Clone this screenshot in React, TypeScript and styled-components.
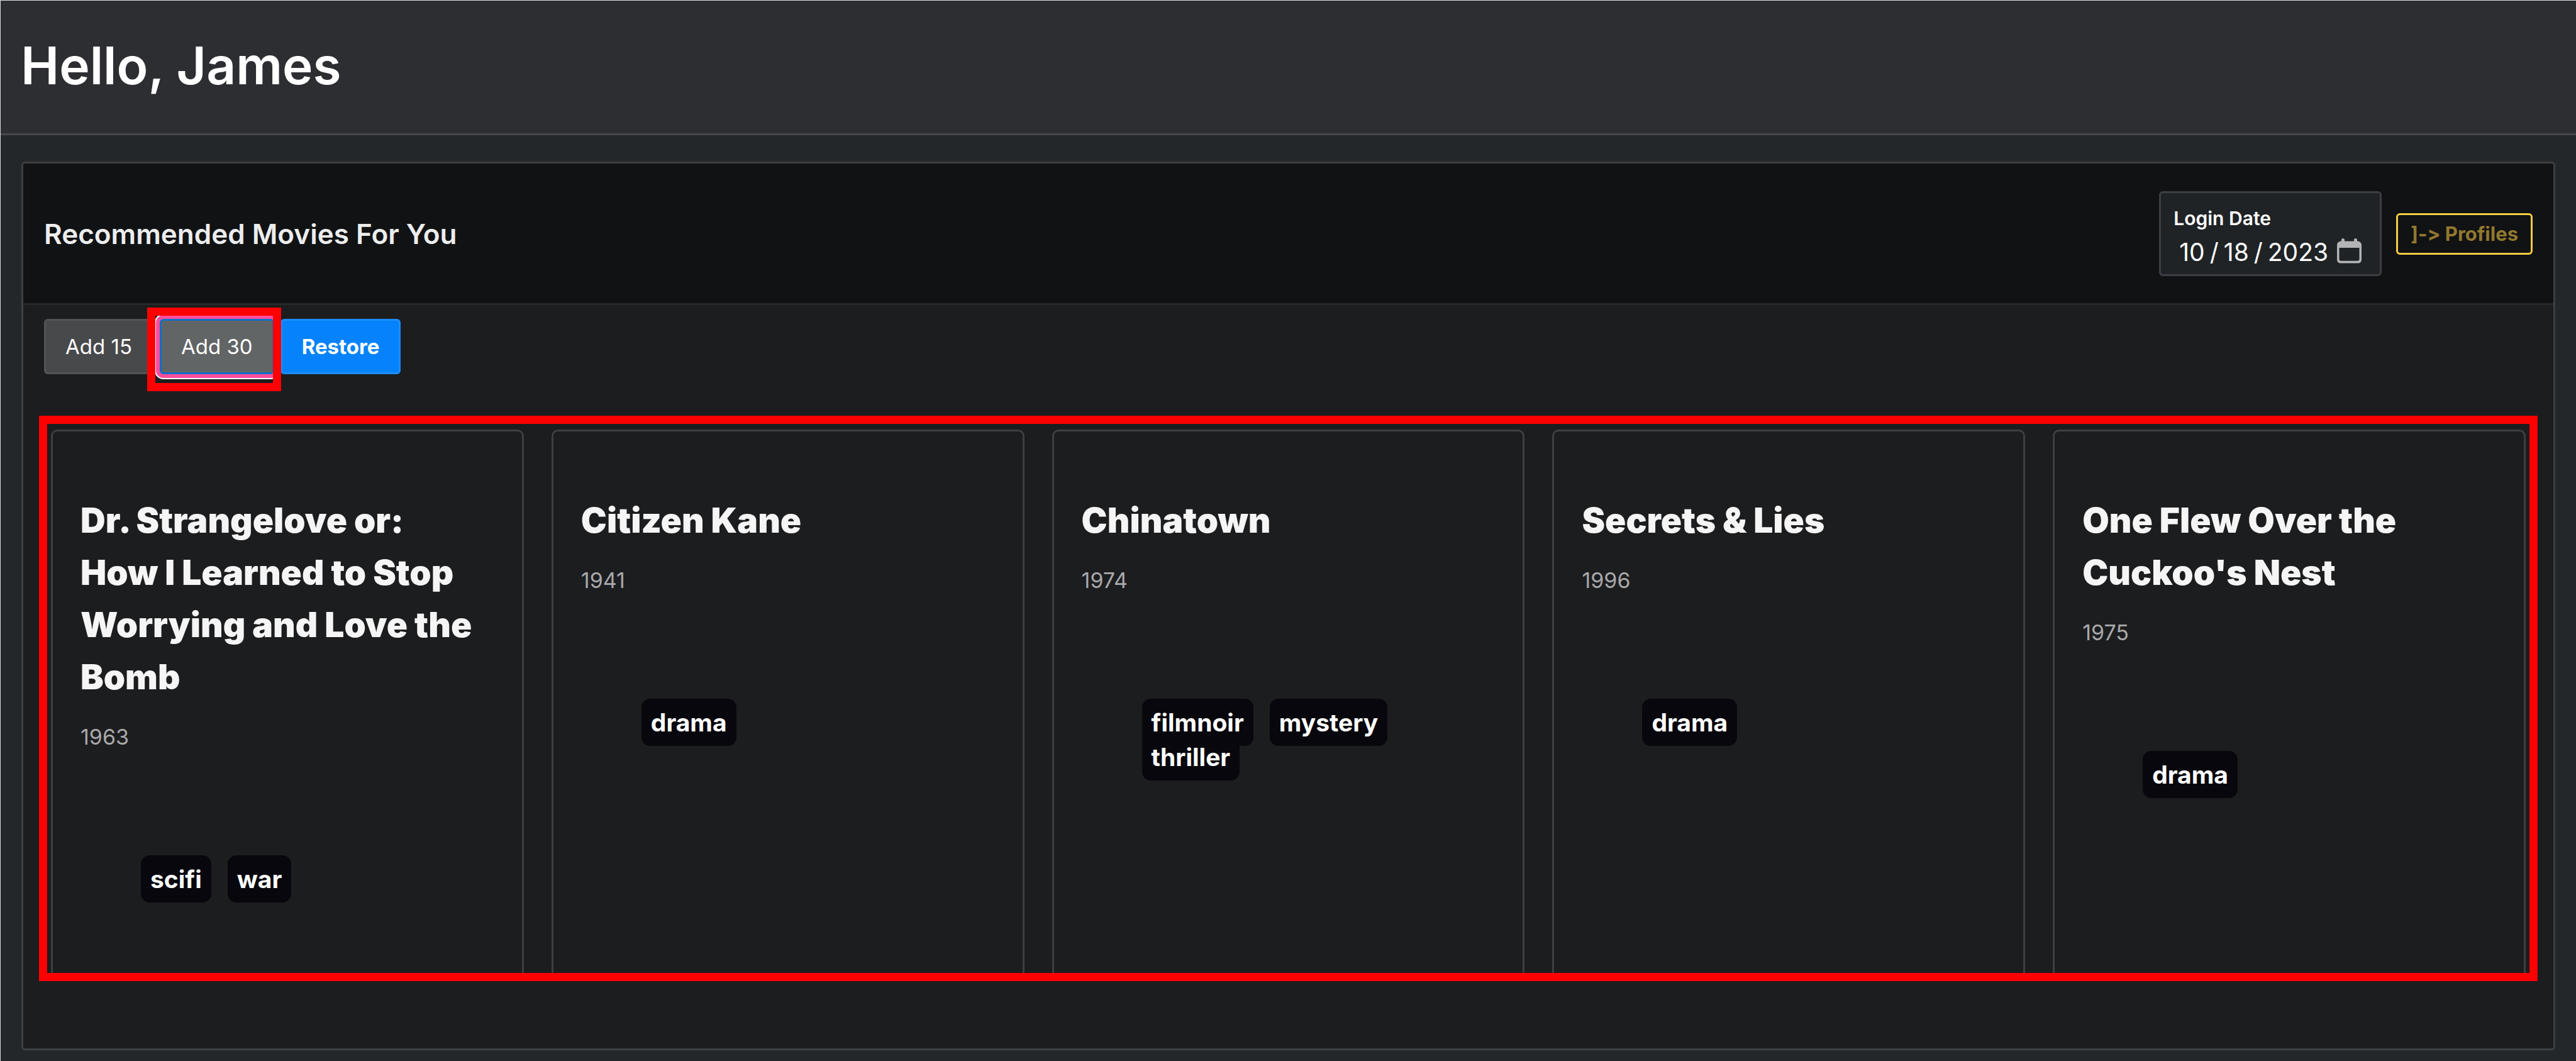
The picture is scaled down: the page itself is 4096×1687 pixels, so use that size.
import React from "react";
import styled, { createGlobalStyle, css } from "styled-components";

const GlobalStyle = createGlobalStyle`
  *, *::before, *::after { box-sizing: border-box; }
  html { background: #23272a; }
  body {
    margin: 0;
    min-height: 100vh;
    border-top: 1px solid #d9dadb;
    border-left: 1px solid #d9dadb;
    background: #23272a;
    color: #ffffff;
    font-family: Inter, "Liberation Sans", sans-serif;
    font-size: 32px;
  }
  h1, h2, h3, p, ul { margin: 0; padding: 0; }
`;

const PageHeader = styled.header`
  display: flex;
  align-items: center;
  padding: 52px 32px 55px;
  background: #2d2e32;
  border-bottom: 3px solid #46484b;
`;

const Greeting = styled.h1`
  font-size: 82px;
  line-height: 104px;
  font-weight: 600;
`;

const Main = styled.main`
  padding: 42px 33px 17px;
`;

const Panel = styled.section`
  border: 3px solid #3d4043;
  border-radius: 6px;
  background: #1c1d1f;
  overflow: hidden;
`;

const PanelHeader = styled.div`
  display: flex;
  align-items: center;
  gap: 23px;
  padding: 44px 33px 43px;
  background: #111214;
  border-bottom: 3px solid #27292b;
`;

const PanelTitle = styled.h2`
  flex: 1;
  font-size: 44px;
  line-height: 56px;
  font-weight: 600;
  color: #ededed;
`;

const DateField = styled.label`
  display: flex;
  flex-direction: column;
  gap: 7px;
  width: 354px;
  padding: 20px 29px 9px 20px;
  border: 3px solid #3c3f43;
  border-radius: 6px;
  background: #1f2325;
  font-size: 30px;
  line-height: 40px;
  font-weight: 600;
`;

const DateRow = styled.span`
  display: flex;
  align-items: center;
`;

const DateInput = styled.input`
  flex: 1;
  min-width: 0;
  height: 53px;
  padding: 0 0 0 8px;
  border: 0;
  background: transparent;
  color: #ffffff;
  color-scheme: dark;
  font-family: inherit;
  font-size: 39px;
  font-weight: 400;

  &::-webkit-calendar-picker-indicator { display: none; }
  &::-webkit-datetime-edit-text { padding: 0 7px; }
`;

const ProfilesButton = styled.button`
  height: 66px;
  padding: 0 20px;
  border: 3px solid #f7cd45;
  border-radius: 6px;
  background: transparent;
  color: #91782f;
  font-family: inherit;
  font-size: 31px;
  font-weight: 700;
  font-variant-ligatures: none;
`;

const Toolbar = styled.div`
  display: flex;
  gap: 10px;
  padding: 22px 33px 66px;
`;

type Tone = "neutral" | "focused" | "primary";

const tones = {
  neutral: css`
    background: #48494b;
    border-color: #525355;
  `,
  focused: css`
    background: #626566;
    border-color: #0c6fc8;
    box-shadow: 0 0 0 6px #ff4d9c, 0 0 0 8px #ffffff;
  `,
  primary: css`
    background: #0683fc;
    border-color: #1b8dff;
    font-weight: 700;
  `,
};

const ActionButton = styled.button<{ $tone: Tone }>`
  height: 88px;
  padding: 0 31px;
  border: 3px solid;
  border-radius: 6px;
  color: #ffffff;
  font-family: inherit;
  font-size: 33px;
  font-weight: 400;
  ${({ $tone }) => tones[$tone]}
`;

const Highlight = styled.div`
  position: relative;
  display: flex;

  &::after {
    content: "";
    position: absolute;
    inset: -18px -11px -27px -20px;
    border: 13px solid #ff0000;
    pointer-events: none;
  }
`;

const MovieFrame = styled.div`
  margin: 0 25px 107px;
  padding: 9px 6px 0;
  border: 13px solid #ff0000;
`;

const MovieGrid = styled.div`
  display: grid;
  grid-template-columns: repeat(5, minmax(0, 1fr));
  gap: 44px;
`;

const MovieCard = styled.article`
  padding: 100px 60px 122px 44px;
  border: 3px solid #3e3f41;
  border-bottom: 0;
  border-radius: 10px 10px 0 0;
`;

const MovieTitle = styled.h3`
  font-size: 55px;
  line-height: 83px;
  font-weight: 900;
  color: #f5f5f5;
`;

const MovieYear = styled.p`
  margin-top: 30px;
  font-size: 34px;
  line-height: 48px;
  color: #a9a9aa;
`;

const TagList = styled.ul`
  display: flex;
  flex-wrap: wrap;
  column-gap: 26px;
  margin-top: 174px;
  padding-left: 96px;
  list-style: none;
`;

const TagItem = styled.li`
  padding: 0 15px;
  font-size: 39px;
  line-height: 55px;
  font-weight: 700;
`;

const Tag = styled.span`
  margin: 0 -15px;
  padding: 14px 15px;
  border-radius: 14px;
  background: #08070d;
`;

const movies = [
  {
    title: "Dr. Strangelove or: How I Learned to Stop Worrying and Love the Bomb",
    year: 1963,
    genres: ["scifi", "war"],
  },
  { title: "Citizen Kane", year: 1941, genres: ["drama"] },
  { title: "Chinatown", year: 1974, genres: ["filmnoir", "mystery", "thriller"] },
  { title: "Secrets & Lies", year: 1996, genres: ["drama"] },
  { title: "One Flew Over the Cuckoo's Nest", year: 1975, genres: ["drama"] },
];

const CalendarIcon = () => (
  <svg width="39" height="44" viewBox="0 0 39 44" aria-hidden="true">
    <path
      fill="#b3b4b6"
      fillRule="evenodd"
      d="M7 2.5a2.5 2.5 0 0 1 5 0v2h15v-2a2.5 2.5 0 0 1 5 0v2h1a6 6 0 0 1 6 6v23.500a5.500 5.500 0 0 1-5.500 5.500h-28a5.500 5.500 0 0 1-5.500-5.500v-23.500a6 6 0 0 1 6-6h1zM3.500 15v18a2.800 2.800 0 0 0 2.800 2.800h26.400a2.800 2.800 0 0 0 2.800-2.800v-18z"
    />
  </svg>
);

export default function App() {
  return (
    <>
      <GlobalStyle />
      <PageHeader>
        <Greeting>Hello, James</Greeting>
      </PageHeader>
      <Main>
        <Panel>
          <PanelHeader>
            <PanelTitle>Recommended Movies For You</PanelTitle>
            <DateField htmlFor="login-date">
              Login Date
              <DateRow>
                <DateInput id="login-date" type="date" defaultValue="2023-10-18" />
                <CalendarIcon />
              </DateRow>
            </DateField>
            <ProfilesButton type="button">{"]-> Profiles"}</ProfilesButton>
          </PanelHeader>
          <Toolbar>
            <ActionButton type="button" $tone="neutral">Add 15</ActionButton>
            <Highlight>
              <ActionButton type="button" $tone="focused">Add 30</ActionButton>
            </Highlight>
            <ActionButton type="button" $tone="primary">Restore</ActionButton>
          </Toolbar>
          <MovieFrame>
            <MovieGrid>
              {movies.map((movie) => (
                <MovieCard key={movie.title}>
                  <MovieTitle>{movie.title}</MovieTitle>
                  <MovieYear>{movie.year}</MovieYear>
                  <TagList>
                    {movie.genres.map((genre) => (
                      <TagItem key={genre}>
                        <Tag>{genre}</Tag>
                      </TagItem>
                    ))}
                  </TagList>
                </MovieCard>
              ))}
            </MovieGrid>
          </MovieFrame>
        </Panel>
      </Main>
    </>
  );
}
